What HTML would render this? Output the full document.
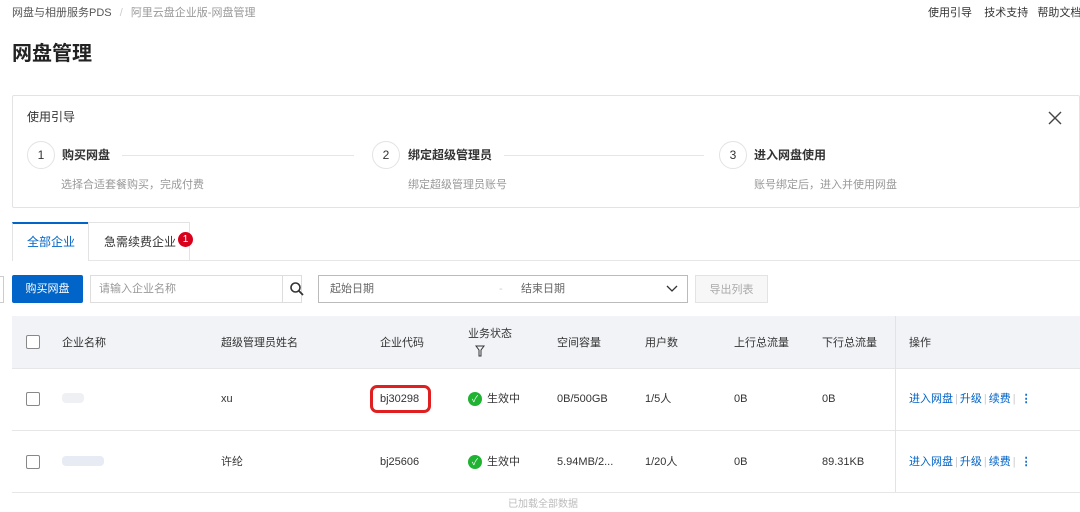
<!DOCTYPE html><html><head><meta charset="utf-8"><style>
*{box-sizing:border-box;margin:0;padding:0}
body{width:1080px;height:504px;overflow:hidden;background:#fff;font-family:"Liberation Sans","Noto Sans CJK SC",sans-serif;color:#333;position:relative}
.a{position:absolute;white-space:nowrap;line-height:14px}
.s12{font-size:12px}.s11{font-size:11px}
.gray{color:#999}
.circ{position:absolute;width:28px;height:28px;border:1px solid #e3e3e3;border-radius:50%;font-size:12px;text-align:center;line-height:26px;color:#333}
.line{position:absolute;height:1px;background:#e6e6e6}
.blue{color:#0064c8}
.cb{position:absolute;width:14px;height:14px;border:1px solid #888;border-radius:2px;background:#fff}
.sep{color:#ccc;margin:0 2px}
</style></head><body>
<div class="a s11" style="left:12px;top:6px;color:#555">网盘与相册服务PDS <span style="color:#ccc;margin:0 5px">/</span> <span class="gray">阿里云盘企业版-网盘管理</span></div>
<div class="a s11" style="left:928px;top:6px;color:#333">使用引导&nbsp;&nbsp;&nbsp;&nbsp;技术支持&nbsp;&nbsp;&nbsp;帮助文档</div>
<div class="a" style="left:12px;top:42px;font-size:20px;line-height:24px;font-weight:bold;color:#222">网盘管理</div>

<div class="a" style="left:12px;top:95px;width:1068px;height:113px;border:1px solid #e3e3e3;border-radius:2px"></div>
<div class="a" style="left:27px;top:110px;font-size:12px">使用引导</div>
<svg class="a" style="left:1048px;top:111px" width="14" height="14" viewBox="0 0 14 14"><path d="M1 1l12 12M13 1L1 13" stroke="#444" stroke-width="1.4"/></svg>
<div class="circ" style="left:27px;top:141px">1</div>
<div class="a" style="left:62px;top:148px;font-size:12px;font-weight:bold">购买网盘</div>
<div class="line" style="left:122px;top:155px;width:232px"></div>
<div class="a s11 gray" style="left:61px;top:178px">选择合适套餐购买，完成付费</div>
<div class="circ" style="left:372px;top:141px">2</div>
<div class="a" style="left:408px;top:148px;font-size:12px;font-weight:bold">绑定超级管理员</div>
<div class="line" style="left:504px;top:155px;width:200px"></div>
<div class="a s11 gray" style="left:408px;top:178px">绑定超级管理员账号</div>
<div class="circ" style="left:719px;top:141px">3</div>
<div class="a" style="left:754px;top:148px;font-size:12px;font-weight:bold">进入网盘使用</div>
<div class="a s11 gray" style="left:754px;top:178px">账号绑定后，进入并使用网盘</div>

<div class="line" style="left:12px;top:260px;width:1068px"></div>
<div class="a" style="left:12px;top:222px;width:77px;height:39px;border:1px solid #e3e3e3;border-top:2px solid #0064c8;border-bottom:none;background:#fff"></div>
<div class="a blue" style="left:27px;top:235px;font-size:12px">全部企业</div>
<div class="a" style="left:88px;top:222px;width:102px;height:38px;border:1px solid #e3e3e3;border-bottom:none"></div>
<div class="a" style="left:104px;top:235px;font-size:12px">急需续费企业</div>
<div class="a" style="left:178px;top:232px;width:15px;height:15px;border-radius:50%;background:#d9001b;color:#fff;font-size:10px;text-align:center;line-height:15px">1</div>

<div class="a" style="left:0;top:276px;width:4px;height:27px;border:1px solid #ccc;border-left:none"></div>
<div class="a" style="left:12px;top:275px;width:71px;height:28px;background:#0064c8;color:#fff;font-size:11px;text-align:center;line-height:28px;border-radius:2px">购买网盘</div>
<div class="a" style="left:90px;top:275px;width:212px;height:28px;border:1px solid #ddd"></div>
<div class="a s11" style="left:99px;top:282px;color:#999">请输入企业名称</div>
<div class="a" style="left:282px;top:275px;width:1px;height:28px;background:#ddd"></div>
<svg class="a" style="left:289px;top:281px" width="16" height="16" viewBox="0 0 16 16"><circle cx="6.5" cy="6.5" r="4.5" fill="none" stroke="#333" stroke-width="1.6"/><path d="M10 10l4 4" stroke="#333" stroke-width="1.8"/></svg>
<div class="a" style="left:318px;top:275px;width:370px;height:28px;border:1px solid #bbb"></div>
<div class="a s11" style="left:330px;top:282px;color:#666">起始日期</div>
<div class="a s11" style="left:499px;top:282px;color:#ccc">-</div>
<div class="a s11" style="left:521px;top:282px;color:#666">结束日期</div>
<svg class="a" style="left:666px;top:284px" width="12" height="10" viewBox="0 0 12 10"><path d="M1 2l5 5 5-5" fill="none" stroke="#333" stroke-width="1.3"/></svg>
<div class="a" style="left:695px;top:275px;width:73px;height:28px;border:1px solid #e3e3e3;background:#f7f7f7;color:#aaa;font-size:11px;text-align:center;line-height:28px">导出列表</div>

<div class="a" style="left:12px;top:316px;width:1068px;height:53px;background:#f1f3f6;border-bottom:1px solid #e6e6e6"></div>
<div class="line" style="left:12px;top:430px;width:1068px"></div>
<div class="line" style="left:12px;top:492px;width:1068px"></div>
<div class="a" style="left:895px;top:316px;width:1px;height:176px;background:#e3e3e3"></div>
<div class="cb" style="left:26px;top:335px"></div>
<div class="cb" style="left:26px;top:392px"></div>
<div class="cb" style="left:26px;top:455px"></div>
<div class="a s11" style="left:62px;top:336px">企业名称</div>
<div class="a s11" style="left:221px;top:336px">超级管理员姓名</div>
<div class="a s11" style="left:380px;top:336px">企业代码</div>
<div class="a s11" style="left:468px;top:327px">业务状态</div>
<svg class="a" style="left:475px;top:345px" width="10" height="12" viewBox="0 0 10 12"><path d="M1 1h8L6 5v6H4V5z" fill="none" stroke="#333" stroke-width="1"/></svg>
<div class="a s11" style="left:557px;top:336px">空间容量</div>
<div class="a s11" style="left:645px;top:336px">用户数</div>
<div class="a s11" style="left:734px;top:336px">上行总流量</div>
<div class="a s11" style="left:822px;top:336px">下行总流量</div>
<div class="a s11" style="left:909px;top:336px">操作</div>

<div class="a" style="left:62px;top:393px;width:22px;height:10px;background:#eef0f4;border-radius:4px"></div>
<div class="a s11" style="left:221px;top:392px">xu</div>
<div class="a" style="left:370px;top:385px;width:61px;height:28px;border:3px solid #e02020;border-radius:7px"></div>
<div class="a s11" style="left:380px;top:392px">bj30298</div>
<div class="a" style="left:468px;top:392px;width:14px;height:14px;border-radius:50%;background:#1fb331;color:#fff;font-size:9px;text-align:center;line-height:14px">✓</div>
<div class="a s11" style="left:487px;top:392px">生效中</div>
<div class="a s11" style="left:557px;top:392px">0B/500GB</div>
<div class="a s11" style="left:645px;top:392px">1/5人</div>
<div class="a s11" style="left:734px;top:392px">0B</div>
<div class="a s11" style="left:822px;top:392px">0B</div>
<div class="a s11 blue" style="left:909px;top:392px">进入网盘<span class="sep">|</span>升级<span class="sep">|</span>续费<span class="sep">|</span> <b>⋮</b></div>

<div class="a" style="left:62px;top:456px;width:42px;height:10px;background:#e6ebf4;border-radius:4px"></div>
<div class="a s11" style="left:221px;top:455px">许纶</div>
<div class="a s11" style="left:380px;top:455px">bj25606</div>
<div class="a" style="left:468px;top:455px;width:14px;height:14px;border-radius:50%;background:#1fb331;color:#fff;font-size:9px;text-align:center;line-height:14px">✓</div>
<div class="a s11" style="left:487px;top:455px">生效中</div>
<div class="a s11" style="left:557px;top:455px">5.94MB/2...</div>
<div class="a s11" style="left:645px;top:455px">1/20人</div>
<div class="a s11" style="left:734px;top:455px">0B</div>
<div class="a s11" style="left:822px;top:455px">89.31KB</div>
<div class="a s11 blue" style="left:909px;top:455px">进入网盘<span class="sep">|</span>升级<span class="sep">|</span>续费<span class="sep">|</span> <b>⋮</b></div>
<div class="a" style="left:508px;top:498px;font-size:10px;color:#bbb">已加载全部数据</div>
</body></html>
